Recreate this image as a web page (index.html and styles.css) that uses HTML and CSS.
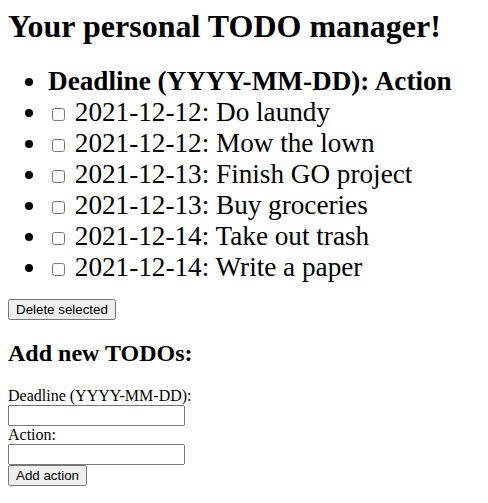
FILE: index.html
```html
<!DOCTYPE html>
<html>
<head>
<meta charset="utf-8">
<title>TODO</title>
<link rel="stylesheet" href="styles.css">
</head>
<body>
<h1 class="title">Your personal TODO manager!</h1>
<form class="list-form">
<ul class="todos">
<li class="head">Deadline (YYYY-MM-DD): Action</li>
<li><input type="checkbox"> 2021-12-12: Do laundy</li>
<li><input type="checkbox"> 2021-12-12: Mow the lown</li>
<li><input type="checkbox"> 2021-12-13: Finish GO project</li>
<li><input type="checkbox"> 2021-12-13: Buy groceries</li>
<li><input type="checkbox"> 2021-12-14: Take out trash</li>
<li><input type="checkbox"> 2021-12-14: Write a paper</li>
</ul>
<button type="button" class="btn">Delete selected</button>
</form>
<h2 class="sub">Add new TODOs:</h2>
<form class="add-form">
<label>Deadline (YYYY-MM-DD):</label><br>
<input type="text" class="field"><br>
<label>Action:</label><br>
<input type="text" class="field"><br>
<button type="button" class="btn">Add action</button>
</form>
</body>
</html>
```
FILE: styles.css
```css
body {
  margin: 8px;
  font-family: "Liberation Serif", "Times New Roman", serif;
  font-size: 16px;
  color: #000;
  background: #fff;
}
.title {
  font-size: 32px;
  margin: 0 0 21.44px;
}
.todos {
  margin: 16px 0;
  padding-left: 40px;
}
.todos li {
  font-size: 27.2px;
}
.todos .head {
  font-weight: bold;
}
.sub {
  font-size: 24px;
  margin: 19.92px 0;
}
.list-form, .add-form {
  margin: 0;
}
.field {
  width: 177px;
  box-sizing: border-box;
}
.btn {
  font-family: Arial, "Liberation Sans", sans-serif;
}
```
